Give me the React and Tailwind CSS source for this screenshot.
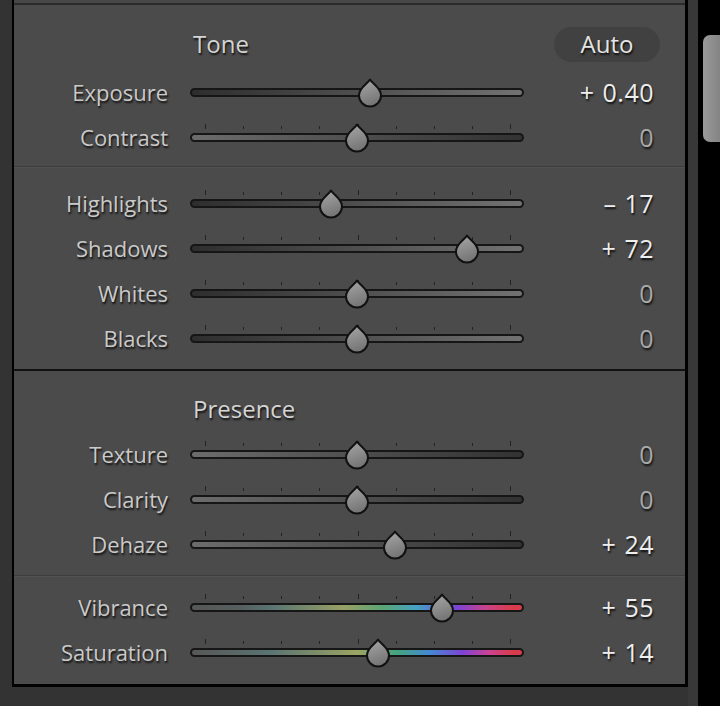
import React from 'react';

const shadow = '[text-shadow:1px_2px_2px_rgba(0,0,0,0.8)]';

const tracks = {
  up: 'bg-linear-to-r from-[#2e2e2e] to-[#727272]',
  down: 'bg-linear-to-r from-[#6c6c6c] to-[#323232]',
  vib: 'bg-[linear-gradient(to_right,#575757_0%,#55605f_15%,#5a7472_24%,#98a064_46%,#5aa575_58%,#45a2c4_68%,#7844d8_80%,#c8438a_89%,#d83c4c_97%,#d83c4c_100%)]',
  sat: 'bg-[linear-gradient(to_right,#575757_0%,#58605f_7%,#5a7472_24%,#9ca462_50%,#44a47e_62%,#4488d2_72%,#7f43d6_82%,#cc4392_90%,#d83c4c_97%,#d83c4c_100%)]',
};

const toneRows = [
  { label: 'Exposure', value: '+ 0.40', pos: 180, track: 'up', ticks: false },
  { label: 'Contrast', value: '0', pos: 167, track: 'down' },
];
const lightRows = [
  { label: 'Highlights', value: '– 17', pos: 141, track: 'up' },
  { label: 'Shadows', value: '+ 72', pos: 277, track: 'up' },
  { label: 'Whites', value: '0', pos: 167, track: 'up' },
  { label: 'Blacks', value: '0', pos: 167, track: 'up' },
];
const presenceRows = [
  { label: 'Texture', value: '0', pos: 167, track: 'down' },
  { label: 'Clarity', value: '0', pos: 167, track: 'down' },
  { label: 'Dehaze', value: '+ 24', pos: 205, track: 'down' },
];
const colorRows = [
  { label: 'Vibrance', value: '+ 55', pos: 252, track: 'vib' },
  { label: 'Saturation', value: '+ 14', pos: 188, track: 'sat' },
];

const tickSizes = ['h-[5px]', 'h-[3px]', 'h-[3px]', 'h-[3px]', 'h-[5px]', 'h-[3px]', 'h-[3px]', 'h-[3px]', 'h-[5px]'];

const Thumb = ({ pos }) => (
  <svg
    width="26"
    height="30"
    viewBox="0 0 26 30"
    className="absolute top-[8px]"
    style={{ left: pos - 13 }}
  >
    <defs>
      <linearGradient id="thumbFill" x1="0" y1="0" x2="0.3" y2="1">
        <stop offset="0" stopColor="#a8a8a8" />
        <stop offset="1" stopColor="#767676" />
      </linearGradient>
    </defs>
    <path
      d="M13 1.5 C15.5 6 24 9.5 24 17.5 A11 11 0 0 1 2 17.5 C2 9.5 10.5 6 13 1.5 Z"
      fill="url(#thumbFill)"
      stroke="#111"
      strokeWidth="2"
      strokeLinejoin="round"
    />
  </svg>
);

const Slider = ({ pos, track, ticks = true }) => (
  <div className="relative flex h-[45px] w-[334px] items-center">
    {ticks && (
      <div className="absolute left-[15px] right-[13px] top-[9px] flex h-[5px] items-end justify-between">
        {tickSizes.map((h, i) => (
          <div key={i} className={`w-px bg-[#222] ${h}`} />
        ))}
      </div>
    )}
    <div className={`h-[9px] w-full rounded-full border-2 border-[#161616] ${tracks[track]}`} />
    <Thumb pos={pos} />
  </div>
);

const Row = ({ label, value, pos, track, ticks }) => (
  <div className="flex h-[45px] items-center">
    <div className={`-mt-px w-[154px] text-right text-[22px] leading-none text-[#cacaca] ${shadow}`}>{label}</div>
    <div className="ml-[22px]">
      <Slider pos={pos} track={track} ticks={ticks} />
    </div>
    <div
      className={`-mt-px w-[130px] text-right text-[25px] leading-none tracking-[0.5px] [word-spacing:1px] ${shadow} ${
        value === '0' ? 'text-[#a9a9a9]' : 'text-[#eeeeee]'
      }`}
    >
      {value}
    </div>
  </div>
);

const Heading = ({ children, extra }) => (
  <div className="flex items-center pl-[179px] pr-[25px]">
    <div className={`text-[24px] leading-none text-[#d4d4d4] ${shadow}`}>{children}</div>
    {extra}
  </div>
);

export default function App() {
  return (
    <div className="flex h-[706px] w-[720px] overflow-hidden bg-black font-['Open_Sans',sans-serif]">
      <div className="w-[12px] bg-[#333333]" />

      <div className="flex w-[676px] flex-col bg-[#333333]">
        <div className="flex flex-col border-l-2 border-r-[3px] border-b-[3px] border-black bg-[#4b4b4b]">
          <div className="h-[3px] bg-[#474747]" />
          <div className="h-[2px] bg-[#2b2b2b]" />

          {/* Tone */}
          <div className="flex flex-col pt-[15px] pb-[6px]">
            <div className="-mt-px mb-px flex h-[50px] flex-col justify-center">
              <Heading
                extra={
                  <div className={`ml-auto flex h-[35px] w-[106px] items-center justify-center rounded-full bg-[#414141] text-[24px] leading-none text-[#e4e4e4] ${shadow}`}>
                    Auto
                  </div>
                }
              >
                Tone
              </Heading>
            </div>
            {toneRows.map((r) => (
              <Row key={r.label} {...r} />
            ))}
          </div>
          <div className="h-px bg-[#3d3d3d]" />
          <div className="flex flex-col border-t border-[#525252] pt-[13px] pb-[8px]">
            {lightRows.map((r) => (
              <Row key={r.label} {...r} />
            ))}
          </div>
          <div className="h-[2px] bg-[#111]" />

          {/* Presence */}
          <div className="flex flex-col pt-[15px] pb-[8px]">
            <div className="flex h-[46px] flex-col justify-center">
              <Heading>Presence</Heading>
            </div>
            {presenceRows.map((r) => (
              <Row key={r.label} {...r} />
            ))}
          </div>
          <div className="h-px bg-[#3d3d3d]" />
          <div className="flex flex-col border-t border-[#525252] pt-[8px] pb-[9px]">
            {colorRows.map((r) => (
              <Row key={r.label} {...r} />
            ))}
          </div>
        </div>
      </div>

      <div className="w-[10px] bg-[#383838]" />
      <div className="flex w-[22px] flex-col bg-black pt-[35px] pl-[5px]">
        <div className="h-[107px] rounded-l-[7px] bg-linear-to-r from-[#9a9a9a] to-[#848484]" />
      </div>
    </div>
  );
}
